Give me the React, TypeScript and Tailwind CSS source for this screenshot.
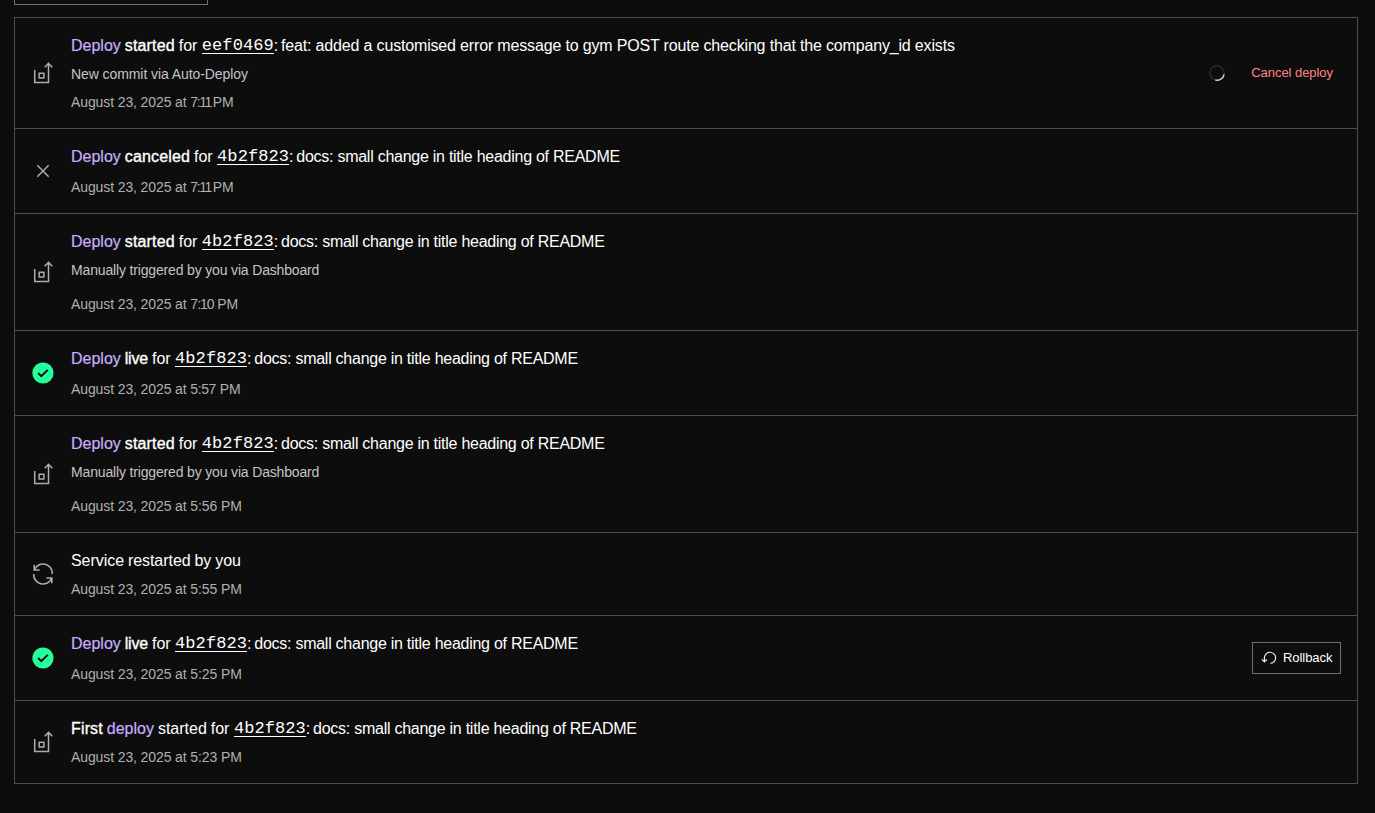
import React from "react";

type Kind = "deploy" | "canceled" | "live" | "restart";

interface Entry {
  kind: Kind;
  title: React.ReactNode;
  note?: React.ReactNode;
  time: string;
  timeTracking: string;
  dateGap: string;
  action?: React.ReactNode;
}

function DeployIcon() {
  return (
    <svg className="size-6" viewBox="0 0 24 24" fill="none" stroke="#adadad" strokeWidth="1.5">
      <path d="M3.7 9v12.5h13.8V2.6M13.7 6.2l3.8-3.8 3.8 3.8" />
      <rect x="8.2" y="12.3" width="4.7" height="4.7" />
    </svg>
  );
}

function CrossIcon() {
  return (
    <svg className="size-6" viewBox="0 0 24 24" fill="none" stroke="#adadad" strokeWidth="1.5">
      <path d="M6.3 6.3l11.4 11.4M17.7 6.3L6.3 17.7" />
    </svg>
  );
}

function LiveIcon() {
  return (
    <svg className="size-6" viewBox="0 0 24 24" fill="none">
      <circle cx="12" cy="12" r="10.6" fill="#24ff9c" />
      <path d="M7.1 12l3.2 3.1 6.5-6.2" stroke="#0d0d0d" strokeWidth="2" />
    </svg>
  );
}

function RestartIcon() {
  return (
    <svg className="size-6" viewBox="0 0 24 24" fill="none" stroke="#adadad" strokeWidth="1.6">
      <path d="M3.2 2.8v5.2h5.4M3.4 7.8A9.3 9.3 0 0 1 21.3 12" />
      <path d="M20.8 21.2v-5.2h-5.4M20.6 16.2A9.3 9.3 0 0 1 2.7 12" />
    </svg>
  );
}

function RollbackIcon() {
  return (
    <svg className="size-4 shrink-0" viewBox="0 0 16 16" fill="none" stroke="#f0f0f0" strokeWidth="1.2">
      <path d="M3.4 11.6V8A5.6 5.6 0 1 1 9.6 13.4" />
      <path d="M.9 9.3l2.5 2.5 2.5-2.5" />
    </svg>
  );
}

function Spinner() {
  return (
    <svg className="size-4" viewBox="0 0 16 16" fill="none" strokeWidth="1.5">
      <circle cx="8" cy="8" r="7.2" stroke="#2b2b2b" />
      <path d="M15.1 9.3A7.2 7.2 0 0 1 6.3 15" stroke="#c9c9c9" />
    </svg>
  );
}

const icons: Record<Kind, React.ReactNode> = {
  deploy: <DeployIcon />,
  canceled: <CrossIcon />,
  live: <LiveIcon />,
  restart: <RestartIcon />,
};

function Purple({ children }: { children: string }) {
  return <span className="text-[#c8adff] [-webkit-text-stroke:0.2px_#c8adff]">{children}</span>;
}

function Strong({ children }: { children: string }) {
  return <span className="tracking-[0.15px] [-webkit-text-stroke:0.35px_#fff]">{children}</span>;
}

function Hash({ children }: { children: string }) {
  return (
    <span className="relative -top-px ml-[0.5px] inline-block h-[18px] border-b border-white font-['Liberation_Mono',monospace] text-[17px] leading-[19px] tracking-[0.07px]">
      {children}
    </span>
  );
}

function Message({ children, tracking = "tracking-[-0.26px]" }: { children: string; tracking?: string }) {
  return (
    <span className={`${tracking} [word-spacing:0px]`}>
      <span className="tracking-[-0.8px]">: </span>
      {children}
    </span>
  );
}

function DeployTitle({
  status,
  hash,
  message,
  tracking,
}: {
  status: string;
  hash: string;
  message: string;
  tracking?: string;
}) {
  return (
    <>
      <Purple>Deploy</Purple>{" "}
      {status === "live" ? (
        <span className="tracking-[-0.2px] [-webkit-text-stroke:0.35px_#fff]">live</span>
      ) : (
        <Strong>{status}</Strong>
      )}{" "}
      for <Hash>{hash}</Hash>
      <Message tracking={tracking}>{message}</Message>
    </>
  );
}

const docs = "docs: small change in title heading of README";

const manualNote = <span className="tracking-[-0.16px]">Manually triggered by you via Dashboard</span>;

const entries: Entry[] = [
  {
    kind: "deploy",
    title: (
      <DeployTitle
        status="started"
        hash="eef0469"
        message="feat: added a customised error message to gym POST route checking that the company_id exists"
        tracking="tracking-[-0.165px]"
      />
    ),
    note: <span className="tracking-[-0.08px]">New commit via Auto-Deploy</span>,
    time: "7:11",
    timeTracking: "tracking-[-1.4px]",
    dateGap: "mt-2",
    action: (
      <div className="flex items-center gap-[26px]">
        <Spinner />
        <button className="pr-2 text-[13px] leading-4 tracking-[-0.05px] text-[#ff8585]">Cancel deploy</button>
      </div>
    ),
  },
  {
    kind: "canceled",
    title: <DeployTitle status="canceled" hash="4b2f823" message={docs} />,
    time: "7:11",
    timeTracking: "tracking-[-1.4px]",
    dateGap: "mt-2",
  },
  {
    kind: "deploy",
    title: <DeployTitle status="started" hash="4b2f823" message={docs} />,
    note: manualNote,
    time: "7:10",
    timeTracking: "tracking-[-1px]",
    dateGap: "mt-3.5",
  },
  {
    kind: "live",
    title: <DeployTitle status="live" hash="4b2f823" message={docs} />,
    time: "5:57",
    timeTracking: "tracking-[-0.4px]",
    dateGap: "mt-2",
  },
  {
    kind: "deploy",
    title: <DeployTitle status="started" hash="4b2f823" message={docs} />,
    note: manualNote,
    time: "5:56",
    timeTracking: "tracking-[-0.1px]",
    dateGap: "mt-3.5",
  },
  {
    kind: "restart",
    title: <span className="tracking-[-0.05px]">Service restarted by you</span>,
    time: "5:55",
    timeTracking: "tracking-[-0.1px]",
    dateGap: "mt-1.5",
  },
  {
    kind: "live",
    title: <DeployTitle status="live" hash="4b2f823" message={docs} />,
    time: "5:25",
    timeTracking: "tracking-[-0.1px]",
    dateGap: "mt-2",
    action: (
      <button className="flex h-8 w-[89px] items-center gap-1.5 border border-[#6e6e6e] pl-2 text-[13px] text-white">
        <RollbackIcon />
        <span className="tracking-[-0.05px]">Rollback</span>
      </button>
    ),
  },
  {
    kind: "deploy",
    title: (
      <>
        <Strong>First</Strong> <Purple>deploy</Purple> started for <Hash>4b2f823</Hash>
        <Message>{docs}</Message>
      </>
    ),
    time: "5:23",
    timeTracking: "tracking-[-0.1px]",
    dateGap: "mt-1.5",
  },
];

export default function App() {
  return (
    <main className="flex h-[813px] w-full flex-col overflow-hidden bg-[#0d0d0d] pr-[17px] pl-3.5 font-['Liberation_Sans',Arial,sans-serif] text-white">
      <div className="h-[5px] w-[194px] shrink-0 border-x border-b border-[#6e6e6e]" />
      <ul className="mt-3 border-x border-b border-[#4d4d4d]">
        {entries.map((entry, i) => (
          <li key={i} className="flex items-center gap-4 border-t border-[#4d4d4d] p-4">
            {icons[entry.kind]}
            <div className="flex min-w-0 grow flex-col whitespace-nowrap">
              <div className="h-6 text-[16px] leading-6 [word-spacing:-0.5px]">{entry.title}</div>
              {entry.note && <p className="mt-1.5 text-[14px] leading-5 text-[#c4c4c4]">{entry.note}</p>}
              <p className={`${entry.dateGap} text-[14px] leading-5 tracking-[-0.11px] text-[#b0b0b0]`}>
                August 23, 2025 at <span className={entry.timeTracking}>{entry.time}</span>
                {entry.time === "7:11" ? <span className="-ml-0.5"> PM</span> : " PM"}
              </p>
            </div>
            {entry.action}
          </li>
        ))}
      </ul>
    </main>
  );
}
